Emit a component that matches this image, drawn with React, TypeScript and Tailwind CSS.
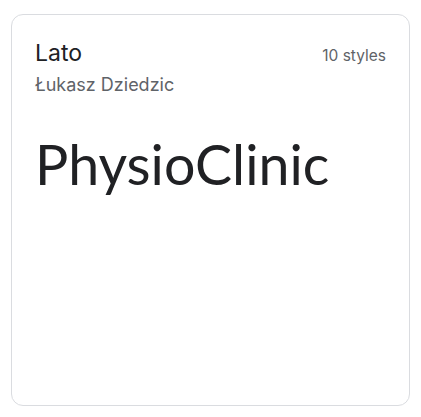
export default function App() {
  return (
    <div className="min-h-screen bg-white p-0">
      <div className="ml-[11px] mt-[14px] flex h-[392px] w-[399px] flex-col rounded-xl border border-[#dadce0] bg-white px-[23px] pt-[23px]">
        <div className="flex items-start justify-between">
          <div className="flex flex-col">
            <div className="font-['Inter',sans-serif] text-[23px] leading-[30px] text-[#202124]">Lato</div>
            <div className="mt-[5px] font-['Inter',sans-serif] text-[18px] leading-[24px] text-[#5f6368]">
              Łukasz Dziedzic
            </div>
          </div>
          <div className="pt-[8px] font-['Inter',sans-serif] text-[15.5px] leading-[20px] text-[#5f6368]">10 styles</div>
        </div>
        <div className="mt-[34px] font-['Lato',sans-serif] text-[55.5px] leading-[66px] text-[#202124]">PhysioClinic</div>
      </div>
    </div>
  )
}
